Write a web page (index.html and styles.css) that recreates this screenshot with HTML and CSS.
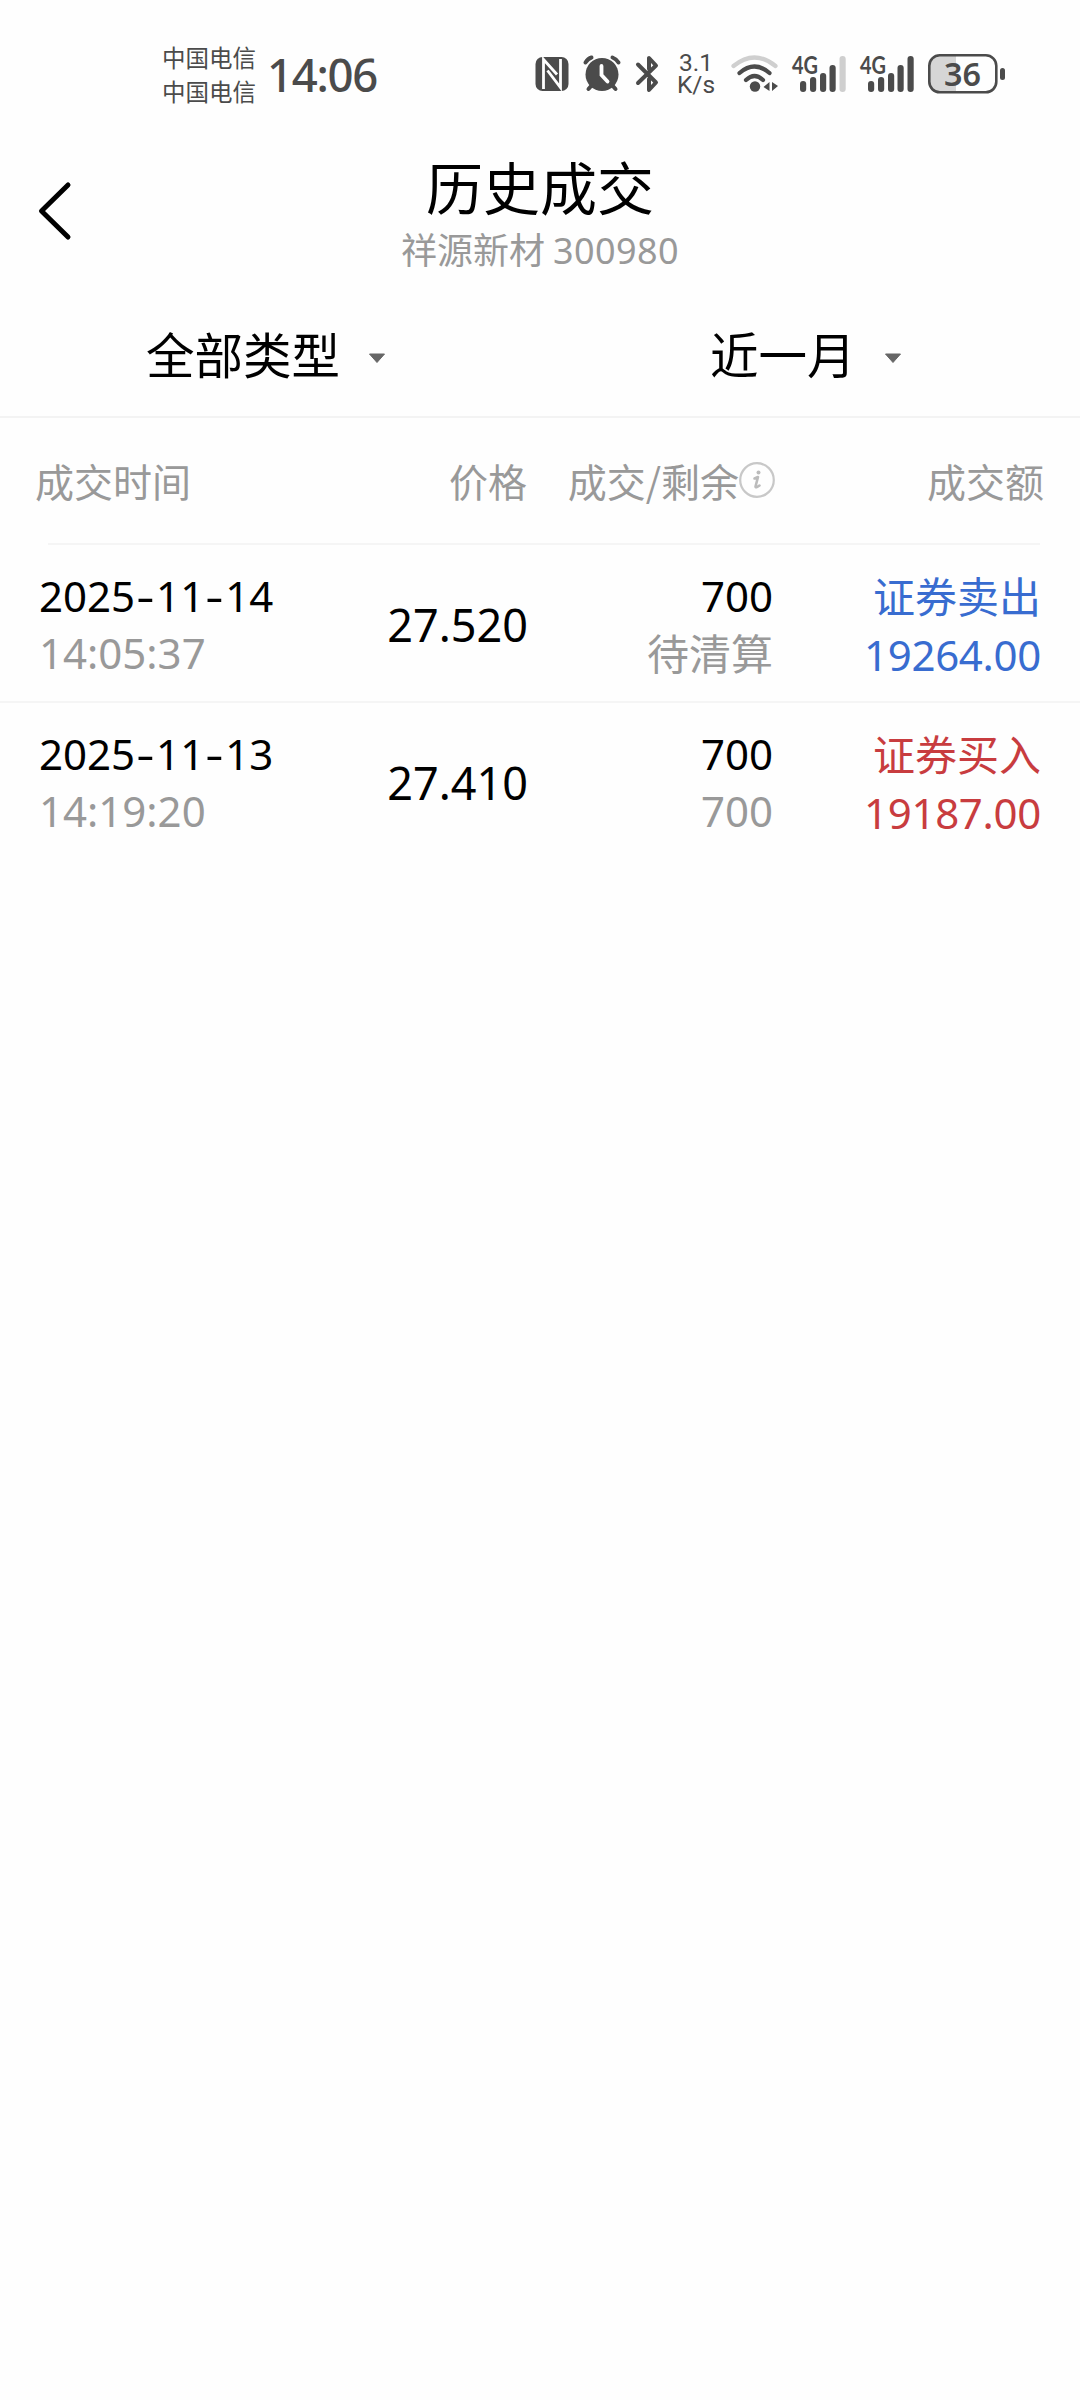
FILE: index.html
```html
<!DOCTYPE html>
<html lang="zh-CN">
<head>
<meta charset="utf-8">
<title>历史成交</title>
<link rel="stylesheet" href="styles.css">
</head>
<body>
<div class="status">
  <div class="carriers"><span>中国电信</span><span>中国电信</span></div>
  <div class="clock">14:06</div>
  <div class="icons">
    <svg class="nfc" width="34" height="36" viewBox="0 0 34 36"><rect x=".5" y="1" width="33" height="34" rx="7" fill="#4b4b4b"/><path d="M8.500 33V3.500L22 18.500M12.500 14.500L25.500 31.500V3" fill="none" stroke="#fefefe" stroke-width="2.800"/></svg>
    <svg class="alarm" width="38" height="37" viewBox="0 0 38 37"><g stroke="#4b4b4b" stroke-width="4" stroke-linecap="round" fill="none"><path d="M2.500 7.500Q5 3.500 8.500 2.500M29.500 2.500Q33.500 4 35.500 7.500M9 30L5.500 34M29 30L32.500 34"/></g><circle cx="19" cy="19.500" r="16.500" fill="#4b4b4b"/><path d="M18.500 11V20L24.500 26.500" fill="none" stroke="#fefefe" stroke-width="3.800" stroke-linecap="round"/></svg>
    <svg class="bt" width="24" height="38" viewBox="0 0 24 38"><path d="M2 9.500L20 27.500L13 35V24M2 28L20 10.500L13 3V14" fill="none" stroke="#4b4b4b" stroke-width="4" stroke-linecap="round" stroke-linejoin="round"/></svg>
    <div class="speed"><span>3.1</span><span>K/s</span></div>
    <svg class="wifi" width="48" height="38" viewBox="0 0 48 38"><g fill="none" stroke-linecap="round" stroke-width="4.200" stroke="#4b4b4b"><path d="M2.500 11Q23.500-6 44.500 11" stroke="#cfcfcf"/><path d="M8.500 18Q23.500 5 38.500 18"/><path d="M15 25Q23.500 17 32 25"/></g><circle cx="24" cy="31.500" r="5.200" fill="#4b4b4b"/><path d="M38.500 27V36L32.500 32ZM41 27V36L47 31Z" fill="#4b4b4b"/></svg>
    <svg class="signal" width="55" height="38" viewBox="0 0 55 38"><text class="net" x="0" y="19" textLength="26" lengthAdjust="spacingAndGlyphs">4G</text><g fill="#4b4b4b"><rect x="8" y="26" width="6.200" height="11" rx="3"/><rect x="18" y="22" width="6.200" height="15" rx="3"/><rect x="28" y="18" width="6.200" height="19" rx="3"/><rect x="37.500" y="10" width="6.200" height="27" rx="3"/><rect x="47.500" y="1" width="6.200" height="36" rx="3" fill="#cfcfcf"/></g></svg>
    <svg class="signal second" width="55" height="38" viewBox="0 0 55 38"><text class="net" x="0" y="19" textLength="26" lengthAdjust="spacingAndGlyphs">4G</text><g fill="#4b4b4b"><rect x="8" y="26" width="6.200" height="11" rx="3"/><rect x="18" y="22" width="6.200" height="15" rx="3"/><rect x="28" y="18" width="6.200" height="19" rx="3"/><rect x="37.500" y="10" width="6.200" height="27" rx="3"/><rect x="47.500" y="1" width="6.200" height="36" rx="3"/></g></svg>
    <svg class="battery" width="78" height="40" viewBox="0 0 78 40"><path d="M28 2H12Q2 2 2 12V28Q2 38 12 38H28Z" fill="#d6d6d6"/><rect x="1.300" y="1.300" width="67" height="37" rx="10.500" fill="none" stroke="#4b4b4b" stroke-width="2.600"/><rect x="72" y="14" width="5" height="12" rx="2.500" fill="#4b4b4b"/><text class="level" x="16" y="32" textLength="37" lengthAdjust="spacingAndGlyphs">36</text></svg>
  </div>
</div>

<header class="nav">
  <svg class="back" width="36" height="60" viewBox="0 0 36 60"><path d="M32 4L5.500 30L32 56" fill="none" stroke="#000" stroke-width="5" stroke-linecap="round" stroke-linejoin="round"/></svg>
  <div class="heading">
    <h1>历史成交</h1>
    <p>祥源新材 <span class="code">300980</span></p>
  </div>
</header>

<div class="filters">
  <div class="filter type">全部类型<svg width="18" height="11" viewBox="0 0 18 11"><path d="M1.500 1H16.500L9 9.500Z" fill="#666" stroke="#666" stroke-linejoin="round"/></svg></div>
  <div class="filter">近一月<svg width="18" height="11" viewBox="0 0 18 11"><path d="M1.500 1H16.500L9 9.500Z" fill="#666" stroke="#666" stroke-linejoin="round"/></svg></div>
</div>

<div class="grid head">
  <span>成交时间</span>
  <span class="r">价格</span>
  <span class="r qty">成交/剩余<svg width="36" height="36" viewBox="0 0 36 36"><circle cx="18" cy="18" r="16.800" fill="none" stroke="#c8c8c8" stroke-width="2.200"/><circle cx="19.500" cy="10.500" r="2" fill="#bbb"/><path d="M15.500 16.500L19 15L16.500 24.500Q16.500 26.500 20.500 23.500" fill="none" stroke="#bbb" stroke-width="2.600" stroke-linecap="round" stroke-linejoin="round"/></svg></span>
  <span class="r">成交额</span>
</div>

<div class="grid row first">
  <div class="cell"><span>2025<i class="dash">-</i>11<i class="dash">-</i>14</span><span class="sub">14:05:37</span></div>
  <div class="price">27.520</div>
  <div class="cell r"><span>700</span><span class="sub cn">待清算</span></div>
  <div class="cell r sell"><span class="cn">证券卖出</span><span class="amount">19264.00</span></div>
</div>
<div class="grid row">
  <div class="cell"><span>2025<i class="dash">-</i>11<i class="dash">-</i>13</span><span class="sub">14:19:20</span></div>
  <div class="price">27.410</div>
  <div class="cell r"><span>700</span><span class="sub">700</span></div>
  <div class="cell r buy"><span class="cn">证券买入</span><span class="amount">19187.00</span></div>
</div>
</body>
</html>
```
FILE: styles.css
```css
* { box-sizing: border-box; margin: 0; padding: 0; }
body {
  width: 1080px;
  min-height: 2400px;
  background: #fefefe;
  color: #000;
  font-family: "Noto Sans", "Noto Sans CJK SC", sans-serif;
}
svg { display: block; flex: none; overflow: visible; }

.status {
  display: flex;
  align-items: center;
  height: 147px;
  padding-left: 162px;
  color: #4b4b4b;
}
.carriers {
  display: flex;
  flex-direction: column;
  width: 105px;
  font: 23.5px/34px "Noto Sans CJK SC", sans-serif;
}
.clock {
  width: 268px;
  font-size: 45.5px;
  font-weight: 500;
  line-height: 50px;
  letter-spacing: -1.3px;
}
.icons { display: flex; align-items: center; height: 40px; }
.alarm { margin-left: 14px; }
.bt { margin-left: 15px; }
.speed {
  display: flex;
  flex-direction: column;
  align-items: center;
  width: 40px;
  margin-left: 16px;
  font: 24.5px/22px Roboto, sans-serif;
}
.wifi { margin-left: 15px; }
.signal { margin-left: 13px; }
.battery { margin-left: 13px; }
.net { font: 700 25px Lato, sans-serif; fill: #4b4b4b; }
.level { font: 600 33px "Noto Sans", sans-serif; fill: #4b4b4b; }

.nav {
  display: grid;
  grid-template-columns: 150px 1fr 150px;
  height: 146px;
}
.back { margin: 34px 0 0 36px; }
.heading { text-align: center; }
.heading h1 {
  padding-top: 6px;
  font: 400 57px/64px "Noto Sans CJK SC", sans-serif;
}
.heading p {
  margin-top: 9px;
  font: 36px/44px "Noto Sans CJK SC", sans-serif;
  color: #999;
}
.code { font-family: "Noto Sans", sans-serif; letter-spacing: .4px; }

.filters {
  display: grid;
  grid-template-columns: 564px 1fr;
  height: 125px;
  border-bottom: 2px solid #f3f3f3;
}
.filter {
  display: flex;
  align-items: center;
  gap: 28px;
  height: 119px;
  padding-left: 146px;
  font: 48.5px/60px "Noto Sans CJK SC", sans-serif;
}
.filter svg { margin-top: 12px; }

.grid {
  display: grid;
  grid-template-columns: 250px 239px 245px 268px;
  padding-left: 39px;
}
.r { text-align: right; }
.head {
  grid-template-columns: 250px 242px 248px 269px;
  align-items: center;
  height: 125px;
  padding: 0 0 2px 35px;
  font: 39px/50px "Noto Sans CJK SC", sans-serif;
  color: #999;
}
.qty { display: flex; justify-content: flex-end; align-items: center; }
.qty svg { margin-top: 1px; }

.row {
  height: 158px;
  border-top: 2px solid #f5f5f5;
  align-items: start;
}
.row.first {
  border-top-color: transparent;
  background: linear-gradient(#f5f5f5, #f5f5f5) 48px 0 / 992px 2px no-repeat border-box;
}
.cell {
  display: flex;
  flex-direction: column;
  padding-top: 22px;
  font-size: 42px;
  line-height: 57px;
}
.cn { font-family: "Noto Sans CJK SC", sans-serif; }
.cell > .cn { margin: -1px 0 1px; }
.sub { color: #999; }
.dash {
  display: inline-block;
  width: 21px;
  text-align: center;
  font-style: normal;
  transform: scaleX(1.35);
}
.price {
  padding-top: 51px;
  font-size: 45px;
  line-height: 57px;
  text-align: right;
}
.amount { padding-top: 2px; letter-spacing: -.3px; }
.sell { color: #386cd0; }
.buy { color: #c83c3f; }
```
